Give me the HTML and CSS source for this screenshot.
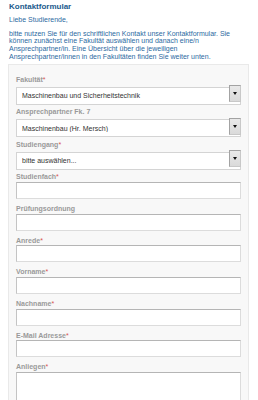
FILE: index.html
```html
<!DOCTYPE html>
<html lang="de">
<head>
	<meta charset="UTF-8">
	<meta name="viewport" content="width=device-width, initial-scale=1.0">
	<link rel="stylesheet" href="styles.css">
	<title>Kontaktformular</title>
</head>
<body>
	<h2 class="title">Kontaktformular</h2>
	<p class="intro">Liebe Studierende,</p>
	<p class="intro">bitte nutzen Sie für den schriftlichen Kontakt unser Kontaktformular. Sie können zunächst eine Fakultät auswählen und danach eine/n Ansprechpartner/in. Eine Übersicht über die jeweiligen Ansprechpartner/innen in den Fakultäten finden Sie weiter unten.</p>
	<form class="box">
		<div class="field">
			<label>Fakultät<span class="req">*</span></label>
			<div class="select">
				<select><option>Maschinenbau und Sicherheitstechnik</option></select>
				<span class="btn"></span>
			</div>
		</div>
		<div class="field">
			<label>Ansprechpartner Fk. 7</label>
			<div class="select">
				<select><option>Maschinenbau (Hr. Mersch)</option></select>
				<span class="btn"></span>
			</div>
		</div>
		<div class="field">
			<label>Studiengang<span class="req">*</span></label>
			<div class="select">
				<select><option>bitte auswählen...</option></select>
				<span class="btn"></span>
			</div>
		</div>
		<div class="field">
			<label>Studienfach<span class="req">*</span></label>
			<input type="text">
		</div>
		<div class="field">
			<label>Prüfungsordnung</label>
			<input type="text">
		</div>
		<div class="field">
			<label>Anrede<span class="req">*</span></label>
			<input type="text">
		</div>
		<div class="field">
			<label>Vorname<span class="req">*</span></label>
			<input type="text">
		</div>
		<div class="field">
			<label>Nachname<span class="req">*</span></label>
			<input type="text">
		</div>
		<div class="field">
			<label>E-Mail Adresse<span class="req">*</span></label>
			<input type="text">
		</div>
		<div class="field">
			<label>Anliegen<span class="req">*</span></label>
			<textarea></textarea>
		</div>
	</form>
</body>
</html>
```

FILE: styles.css
```css
body{
	margin:2px 8px;
	background:#fff;
	color:#2d6a9f;
	font-family:"Liberation Sans", Arial, sans-serif;
}
.title{
	margin:0 0 4px 1px;
	font-size:8px;
	line-height:10px;
	font-weight:bold;
	color:#1b5a8c;
}
.intro{
	max-width:226px;
	margin:0 0 6px 1px;
	font-size:7px;
	line-height:7.7px;
}
.intro + .intro{
	margin-bottom:3.5px;
}
.box{
	margin:0 1px 0 0;
	padding:10.5px 7px 20px;
	background:#f8f8f8;
	border:1px solid #e9e9e9;
}
.field + .field{
	margin-top:6.17px;
}
.field label{
	display:block;
	margin-bottom:0.5px;
	font-size:7px;
	line-height:8px;
	font-weight:bold;
	color:#9a9a9a;
}
.req{
	color:#d9534f;
	font-weight:normal;
}
.select{
	position:relative;
	height:18px;
}
.select select{
	appearance:none;
	-webkit-appearance:none;
	box-sizing:border-box;
	width:100%;
	height:18px;
	margin:0;
	padding:0 0 0 5px;
	background:#fff;
	border:1px solid #d4d4d4;
	border-radius:0;
	color:#333;
	font-family:inherit;
	font-size:7px;
	outline:none;
}
.btn{
	position:absolute;
	top:1px;
	right:0;
	box-sizing:border-box;
	width:12px;
	height:17px;
	background:linear-gradient(#e9e9e9, #dadada);
	border:1px solid #a3a3a3;
	border-right-color:#c8c8c8;
	border-bottom-color:#c8c8c8;
}
.btn::after{
	content:"";
	position:absolute;
	left:3px;
	top:6px;
	border-left:2px solid transparent;
	border-right:2px solid transparent;
	border-top:3px solid #111;
}
.field input,
.field textarea{
	display:block;
	box-sizing:border-box;
	width:100%;
	height:17px;
	margin:0;
	padding:0 5px;
	background:#fff;
	border:1px solid #dcdcdc;
	border-top-color:#b5b5b5;
	border-left-color:#c4c4c4;
	border-radius:0;
	font-family:inherit;
	font-size:7px;
	outline:none;
}
.field textarea{
	height:60px;
	resize:none;
}
```
